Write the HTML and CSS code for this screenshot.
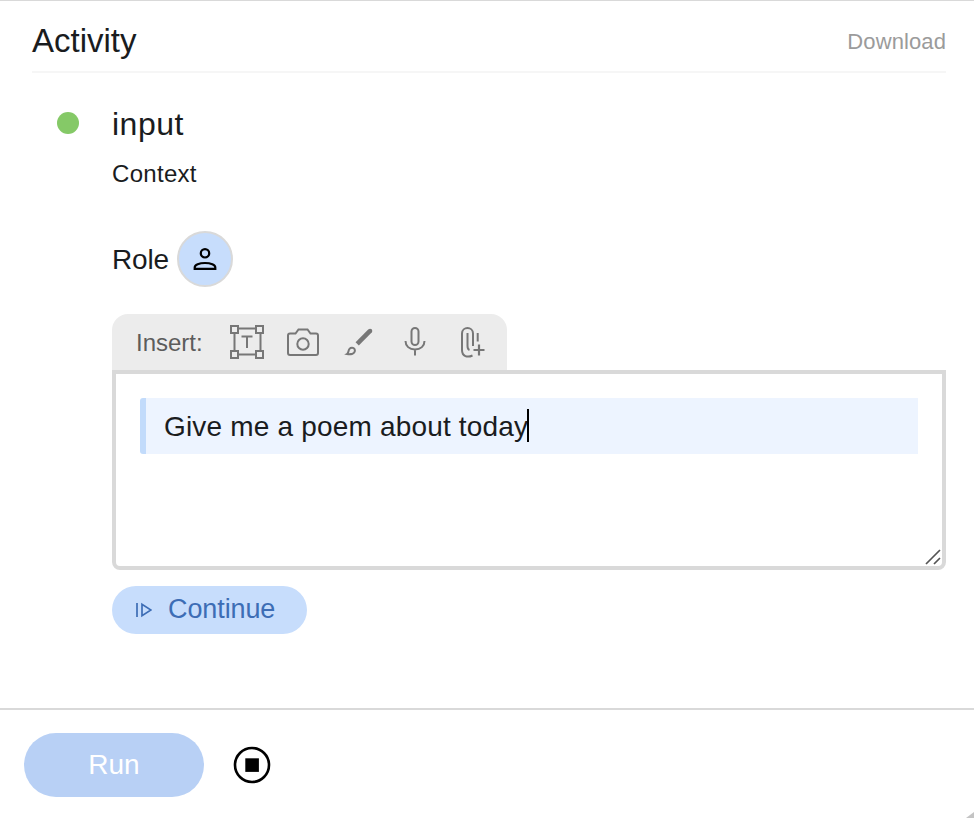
FILE: index.html
```html
<!DOCTYPE html>
<html lang="en">
<head>
<meta charset="utf-8">
<title>Activity</title>
<link rel="stylesheet" href="styles.css">
</head>
<body>
<div class="panel">
  <main class="activity">
    <header class="header">
      <h1 class="title">Activity</h1>
      <a class="download">Download</a>
    </header>
    <section class="entry">
      <span class="status"></span>
      <div class="content">
        <h2 class="name">input</h2>
        <p class="context">Context</p>
        <div class="role">
          <span class="role-label">Role</span>
          <button class="avatar" aria-label="User">
            <svg width="24" height="24" viewBox="0 0 24 24" fill="none" stroke="#000" stroke-width="2.200"><circle cx="12" cy="6.300" r="4.200"/><path d="M1.700 21.800v-1.300c0-2.600 4.500-4.500 10.300-4.500s10.300 1.900 10.300 4.500v1.300z"/></svg>
          </button>
        </div>
        <div class="toolbar">
          <span class="insert">Insert:</span>
          <svg class="tool" viewBox="0 0 36 36"><path d="M8.500 4.500h19M8.500 30.500h19M5.500 8v19M31.500 8v19"/><path d="M2 2h7v7H2zM27 2h7v7h-7zM2 27h7v7H2zM27 27h7v7h-7z"/><path d="M12.500 12.500h11M18 12.500v11.500"/></svg>
          <svg class="tool" viewBox="0 0 36 36"><path d="M5 9.500h5.500l3-4h9l3 4H31q2 0 2 2V29q0 2-2 2H5q-2 0-2-2V11.500q0-2 2-2z"/><circle cx="18" cy="20" r="5.700"/></svg>
          <svg class="tool" viewBox="0 0 36 36"><path class="handle" d="M16.200 19.800 28.800 7.200"/><circle class="solid" cx="29.100" cy="6.900" r="2.200"/><path d="M6 30c2-1.200 1-3.500 2.500-5.200 1.300-1.500 4-1.500 5 .2.900 1.600.3 3.800-2 4.700-2 .7-3.700.6-5.500.3z"/></svg>
          <svg class="tool" viewBox="0 0 36 36"><rect x="14.500" y="4" width="7" height="17" rx="3.500"/><path d="M8.500 17c0 5 3.800 8.500 9.500 8.500s9.500-3.500 9.500-8.500M18 25.500v6"/></svg>
          <svg class="tool" viewBox="0 0 36 36"><path d="M20 22V9.500c0-7.300-11-7.300-11 0V26c0 6.500 5.500 7.800 10.500 5.500M14.500 9v13c0 2.500.5 3.500 2 4M24.700 9v8.500"/><path class="plus" d="M20.500 26h11M26 20.500v11"/></svg>
        </div>
        <div class="editor">
          <div class="block"><span>Give me a poem about today</span><i class="caret"></i></div>
          <svg class="grip" width="16" height="16" viewBox="0 0 16 16"><path d="M1 15 15 1M9 15l6-6"/></svg>
        </div>
        <button class="continue">
          <svg width="16" height="16" viewBox="0 0 16 16"><path d="M1 1v14M6 2.200v11.600l9-5.800z"/></svg>
          <span>Continue</span>
        </button>
      </div>
    </section>
  </main>
  <footer class="footer">
    <button class="run">Run</button>
    <svg class="stop" width="38" height="38" viewBox="0 0 38 38"><circle cx="19" cy="19" r="17"/><path d="M12.300 12.300h13.600v13.600H12.300z"/></svg>
  </footer>
  <span class="corner"></span>
</div>
</body>
</html>
```
FILE: styles.css
```css
* { box-sizing: border-box; }
body {
  margin: 0;
  background: #fff;
  color: #1a1c1e;
  font-family: "Liberation Sans", Arial, sans-serif;
}
button { border: 0; padding: 0; font-family: inherit; }
h1, h2, p { margin: 0; font-weight: 400; }
svg { display: block; flex: none; }
.panel {
  position: relative;
  width: 974px;
  height: 818px;
  overflow: hidden;
  display: flex;
  flex-direction: column;
  border-top: 1px solid #d9d9d9;
}
.activity { flex: 1; padding: 0 28px 0 32px; }
.header {
  height: 72px;
  display: flex;
  align-items: center;
  justify-content: space-between;
  padding-top: 10px;
  border-bottom: 2px solid #f6f6f6;
}
.title { font-size: 33px; line-height: 40px; }
.download { padding-top: 2px; font-size: 22px; color: #9b9b9b; line-height: 40px; letter-spacing: 0.1px; }
.entry { display: flex; padding-top: 31px; }
.status {
  width: 22px;
  height: 22px;
  margin: 8px 33px 0 25px;
  border-radius: 50%;
  background: #85c967;
}
.content { width: 834px; }
.name { font-size: 32px; line-height: 40px; letter-spacing: 0.5px; }
.context { margin-top: 15px; font-size: 24px; line-height: 30px; letter-spacing: 0.3px; }
.role { display: flex; align-items: center; gap: 8px; margin-top: 42px; }
.role-label { width: 57px; padding-top: 1px; font-size: 28px; letter-spacing: -0.2px; white-space: nowrap; }
.avatar {
  width: 56px;
  height: 56px;
  display: flex;
  align-items: center;
  justify-content: center;
  border: 2px solid #d9d9d9;
  border-radius: 50%;
  background: #c7ddfc;
}
.toolbar {
  width: 395px;
  height: 56px;
  margin-top: 27px;
  padding-left: 24px;
  display: flex;
  align-items: center;
  gap: 20px;
  border-radius: 16px 16px 0 0;
  background: #ececec;
}
.insert { width: 73px; padding-top: 2px; color: #5c5c5c; font-size: 24px; }
.tool { width: 36px; height: 36px; fill: none; stroke: #777; stroke-width: 2; }
.tool .solid { fill: #777; stroke: none; }
.tool .handle { stroke-width: 4.6; }
.tool .plus { stroke-width: 2.2; }
.editor {
  position: relative;
  height: 200px;
  padding: 24px;
  border: 4px solid #d9d9d9;
  border-radius: 0 0 8px 8px;
}
.block {
  height: 56px;
  padding-left: 18px;
  display: flex;
  align-items: center;
  border-left: 6px solid #c2dbfb;
  border-radius: 3px 0 0 3px;
  background: #edf4ff;
  font-size: 28px;
  letter-spacing: 0.18px;
  white-space: nowrap;
}
.block span { padding-top: 2px; }
.caret { width: 2px; height: 33px; margin: -2px 0 0 -1px; background: #000; }
.grip { position: absolute; right: 1px; bottom: 1px; fill: none; stroke: #555; stroke-width: 1.7; }
.continue {
  width: 195px;
  height: 48px;
  margin-top: 16px;
  padding-left: 24px;
  display: flex;
  align-items: center;
  gap: 16px;
  border-radius: 24px;
  background: #c7ddfc;
  color: #3d6db5;
  font-size: 27px;
  letter-spacing: -0.1px;
}
.continue span { padding-bottom: 1px; }
.continue svg { fill: none; stroke: #3d6db5; stroke-width: 1.7; }
.footer {
  height: 110px;
  display: flex;
  align-items: center;
  gap: 29px;
  padding: 2px 0 0 24px;
  border-top: 2px solid #d9d9d9;
}
.run {
  width: 180px;
  height: 64px;
  border-radius: 32px;
  background: #b8d0f5;
  color: #fff;
  font-size: 28px;
}
.stop circle { fill: none; stroke: #000; stroke-width: 2.6; }
.corner {
  position: absolute;
  right: 0;
  bottom: 0;
  width: 8px;
  height: 6px;
  background: #c4c4c4;
  clip-path: polygon(100% 0, 100% 100%, 0 100%);
}
```
